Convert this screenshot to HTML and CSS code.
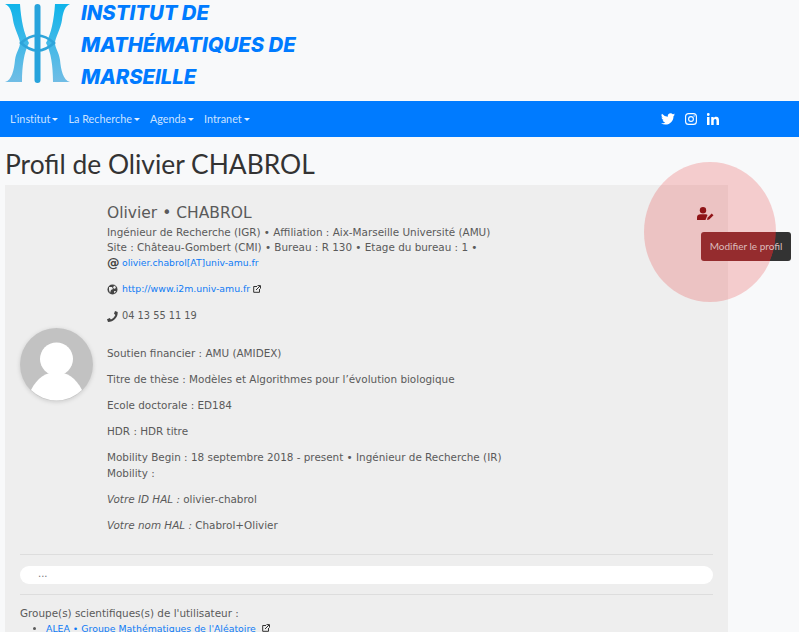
FILE: index.html
```html
<html>
    <head>
        <meta charset="utf-8">
        <link rel="stylesheet" href="styles.css">
    </head>
    <body>
        <div id="brand">
            <svg class="logo" width="80" height="90" viewBox="0 0 80 90">
                <defs>
                    <linearGradient id="logoblue" gradientUnits="userSpaceOnUse" x1="0" y1="4" x2="0" y2="83">
                        <stop offset="0" stop-color="#0fb4ea"/>
                        <stop offset="1" stop-color="#72bde5"/>
                    </linearGradient>
                </defs>
                <path id="strand" fill="url(#logoblue)" d="M5 4H20C21 20 24 34 29 43C24 52 22 66 22 82H5C12 80 14 70 15 60C16 52 20 48 20 43C20 38 14 28 13 20C12 12 10 6 5 4Z"/>
                <path fill="url(#logoblue)" transform="translate(75 0) scale(-1 1)" d="M5 4H20C21 20 24 34 29 43C24 52 22 66 22 82H5C12 80 14 70 15 60C16 52 20 48 20 43C20 38 14 28 13 20C12 12 10 6 5 4Z"/>
                <path fill="none" stroke="#2fa4da" stroke-width="2.500" d="M21 43Q37.500 28 54 43Q37.500 58 21 43Z"/>
                <rect x="34.500" y="4" width="6" height="79" rx="3" fill="#27a3dc"/>
            </svg>
            <div class="brandtitle">INSTITUT DE<br>MATHÉMATIQUES DE<br>MARSEILLE</div>
        </div>
        <div id="navbar">
            <div class="navlinks">
                <span class="navlink">L'institut</span>
                <span class="navlink">La Recherche</span>
                <span class="navlink">Agenda</span>
                <span class="navlink">Intranet</span>
            </div>
            <div class="socials">
                <svg width="14" height="12" viewBox="0 0 24 20"><path fill="#fff" d="M24 2.4a10 10 0 0 1-2.8.8A5 5 0 0 0 23.300 .5a10 10 0 0 1-3.100 1.200A4.900 4.900 0 0 0 11.800 6.200 14 14 0 0 1 1.700 1a4.900 4.900 0 0 0 1.500 6.600 4.900 4.900 0 0 1-2.200-.6c0 2.400 1.700 4.400 3.900 4.900a5 5 0 0 1-2.200.1 4.900 4.900 0 0 0 4.600 3.400A10 10 0 0 1 0 17.400 14 14 0 0 0 7.500 19.600c9.100 0 14.200-7.700 13.900-14.500A10 10 0 0 0 24 2.400Z"/></svg>
                <svg width="12" height="12" viewBox="0 0 12 12"><rect x=".6" y=".6" width="10.800" height="10.800" rx="3" fill="none" stroke="#fff" stroke-width="1.100"/><circle cx="6" cy="6" r="2.400" fill="none" stroke="#fff" stroke-width="1.100"/><circle cx="9.100" cy="2.900" r=".7" fill="#fff"/></svg>
                <svg width="12" height="12" viewBox="0 0 12 12"><path fill="#fff" d="M0 4h2.500v8H0zM1.250 0a1.400 1.400 0 1 1 0 2.900 1.400 1.400 0 0 1 0-2.900zM4.200 4h2.400v1.100C7 4.400 7.900 3.800 9.100 3.800 11.500 3.800 12 5.300 12 7.400V12H9.500V8c0-1-.1-2.100-1.300-2.100S6.700 6.900 6.700 7.900V12H4.200z"/></svg>
            </div>
        </div>
        <h1 class="pagetitle">Profil de Olivier CHABROL</h1>
        <div id="card">
            <div class="profile">
                <div class="avatar">
                    <svg width="73" height="73" viewBox="0 0 73 73">
                        <circle cx="36.500" cy="36.500" r="36.500" fill="#c2c2c2"/>
                        <circle cx="36.500" cy="31" r="16.500" fill="#fff"/>
                        <path fill="#fff" d="M11 62C17 50 26 44 36.500 44S56 50 62 62A36.500 36.500 0 0 1 11 62Z"/>
                    </svg>
                </div>
                <div class="details">
                    <div class="name">Olivier • CHABROL</div>
                    <div class="line">Ingénieur de Recherche (IGR) • Affiliation : Aix-Marseille Université (AMU)</div>
                    <div class="line">Site : Château-Gombert (CMI) • Bureau : R 130 • Etage du bureau : 1 •</div>
                    <div class="contact first"><span class="cicon bold">@</span><a class="email">olivier.chabrol[AT]univ-amu.fr</a></div>
                    <div class="contact">
                        <svg class="cicon" width="11" height="11" viewBox="0 0 11 11"><circle cx="5.500" cy="5.500" r="5" fill="#444"/><path fill="#eee" d="M2 3h3l1 2-2 1-1 3-1-3zM7 1.500l2 1.500-1 2-2-1zM7 7h2l-1.500 2.500z"/></svg>
                        <a class="website">http://www.i2m.univ-amu.fr</a>
                        <svg class="ext" width="8" height="8" viewBox="0 0 8 8"><path fill="none" stroke="#333" d="M4 1.500H.7v5.800h5.800V4M3 5l4-4M4.500 .6h3v3"/></svg>
                    </div>
                    <div class="contact phone">
                        <svg class="cicon" width="11" height="11" viewBox="0 0 11 11"><path fill="#444" d="M8 0l2.700 1C11 6.500 6.500 11 1 11L0 8.300l2.800-1.200 1.100 1.300C5.700 7.600 7.600 5.700 8.400 3.900L7 2.800z"/></svg>
                        <span>04 13 55 11 19</span>
                    </div>
                    <div class="para first">Soutien financier : AMU (AMIDEX)</div>
                    <div class="para">Titre de thèse : Modèles et Algorithmes pour l’évolution biologique</div>
                    <div class="para">Ecole doctorale : ED184</div>
                    <div class="para">HDR : HDR titre</div>
                    <div class="para">Mobility Begin : 18 septembre 2018 - present • Ingénieur de Recherche (IR)<br>Mobility :</div>
                    <div class="para"><em>Votre ID HAL :</em> olivier-chabrol</div>
                    <div class="para"><em>Votre nom HAL :</em> Chabrol+Olivier</div>
                </div>
            </div>
            <hr class="sep">
            <div class="pill">...</div>
            <hr class="sep after">
            <div class="groups">Groupe(s) scientifiques(s) de l'utilisateur :</div>
            <ul class="grouplist">
                <li><a>ALEA • Groupe Mathématiques de l'Aléatoire</a>
                    <svg class="ext" width="8" height="8" viewBox="0 0 8 8"><path fill="none" stroke="#333" d="M4 1.500H.7v5.800h5.800V4M3 5l4-4M4.500 .6h3v3"/></svg>
                </li>
            </ul>
        </div>
        <div class="halo"></div>
        <svg class="editicon" width="17" height="13" viewBox="0 0 17 13">
            <circle cx="6" cy="3.200" r="3.200" fill="#8f1417"/>
            <path fill="#8f1417" d="M0 13V10.500C0 8.500 1.500 7.300 3.500 7.300H8.500C9.500 7.300 10 7.500 10.500 8L8.500 13Z"/>
            <path fill="#8f1417" d="M10 13l.5-2.200 4.200-4.300 1.800 1.800-4.300 4.200Z"/>
        </svg>
        <div class="tip">Modifier le profil</div>
    </body>
</html>
```
FILE: styles.css
```css
html, body {
    height: 632px;
    overflow: hidden;
}

body {
    margin: 0;
    position: relative;
    background-color: #f8f9fa;
    font-family: 'DejaVu Sans', sans-serif;
    font-size: 10.42px;
    line-height: 16px;
    color: #5a5a5a;
}

a {
    color: #0f7bf5;
}

#brand {
    height: 101px;
    display: flex;
}

.brandtitle {
    margin: -3px 0 0 1px;
    font-family: 'Inter', sans-serif;
    font-weight: 800;
    font-style: italic;
    font-size: 20.3px;
    line-height: 32px;
    color: #007bff;
}

#navbar {
    height: 36px;
    background-color: #007bff;
    display: flex;
    align-items: center;
    justify-content: space-between;
    padding: 0 80px 0 10px;
}

.navlinks {
    display: flex;
    gap: 10px;
}

.navlink {
    font-family: 'Lato', sans-serif;
    font-size: 10.8px;
    letter-spacing: 0.02px;
    color: rgba(255,255,255,0.8);
}

.navlink::after {
    content: "";
    display: inline-block;
    margin-left: 2px;
    vertical-align: 2px;
    border-top: 3px solid rgba(255,255,255,0.9);
    border-left: 3px solid transparent;
    border-right: 3px solid transparent;
}

.socials {
    display: flex;
    align-items: center;
    gap: 10px;
}

.pagetitle {
    margin: 0;
    padding: 11px 0 0 5px;
    height: 37px;
    font-family: 'Lato', sans-serif;
    font-weight: 400;
    font-size: 26.4px;
    line-height: 32px;
    color: #333;
}

#card {
    width: 693px;
    margin-left: 5px;
    padding: 18px 15px 0;
    background-color: #eee;
    height: 500px;
}

.profile {
    display: flex;
    align-items: center;
}

.avatar {
    width: 87px;
    flex: none;
    height: 73px;
    margin-bottom: 7px;
}

.avatar svg {
    filter: drop-shadow(0 1px 2px rgba(0,0,0,0.15));
}

.name {
    font-size: 15.5px;
    line-height: 20px;
    margin-bottom: 2px;
}

.line {
    line-height: 15px;
}

.contact {
    display: flex;
    align-items: center;
    margin-top: 10px;
    height: 16px;
}

.contact.first {
    margin-top: 0;
}

.contact.phone {
    margin-top: 11px;
    font-size: 9.8px;
}

.cicon {
    width: 11px;
    margin-right: 4px;
    flex: none;
}

.bold {
    font-weight: bold;
    color: #444;
    font-size: 12.5px;
}

.email {
    font-size: 9.25px;
}

.website {
    font-size: 9.35px;
}

.ext {
    margin-left: 3px;
}

.para {
    margin-top: 10px;
}

.para.first {
    margin-top: 21px;
}

.sep {
    border: 0;
    border-top: 1px solid #ddd;
    margin: 21px 0 11px;
}

.sep.after {
    margin: 10px 0;
}

.pill {
    height: 18px;
    line-height: 16px;
    padding-left: 18px;
    border-radius: 9px;
    background-color: #fff;
    font-size: 10px;
    color: #777;
}

.grouplist {
    margin: 0;
    padding-left: 26px;
    font-size: 9.35px;
    line-height: 15px;
}

.halo {
    position: absolute;
    left: 644px;
    top: 162px;
    width: 132px;
    height: 140px;
    border-radius: 50%;
    background-color: rgba(230,40,40,0.21);
}

.editicon {
    position: absolute;
    left: 697px;
    top: 207px;
}

/* the part of the tooltip under the red circle is tinted */
.tip {
    position: absolute;
    left: 701px;
    top: 232px;
    width: 90px;
    height: 29px;
    border-radius: 3px;
    background-color: #333;
    background-image: radial-gradient(ellipse 66px 70px at 9px 0, #952c2e 99%, transparent 100%);
    text-align: center;
    font-family: 'Lato', sans-serif;
    font-size: 10px;
    line-height: 29px;
    color: #dcbcbc;
}
```
